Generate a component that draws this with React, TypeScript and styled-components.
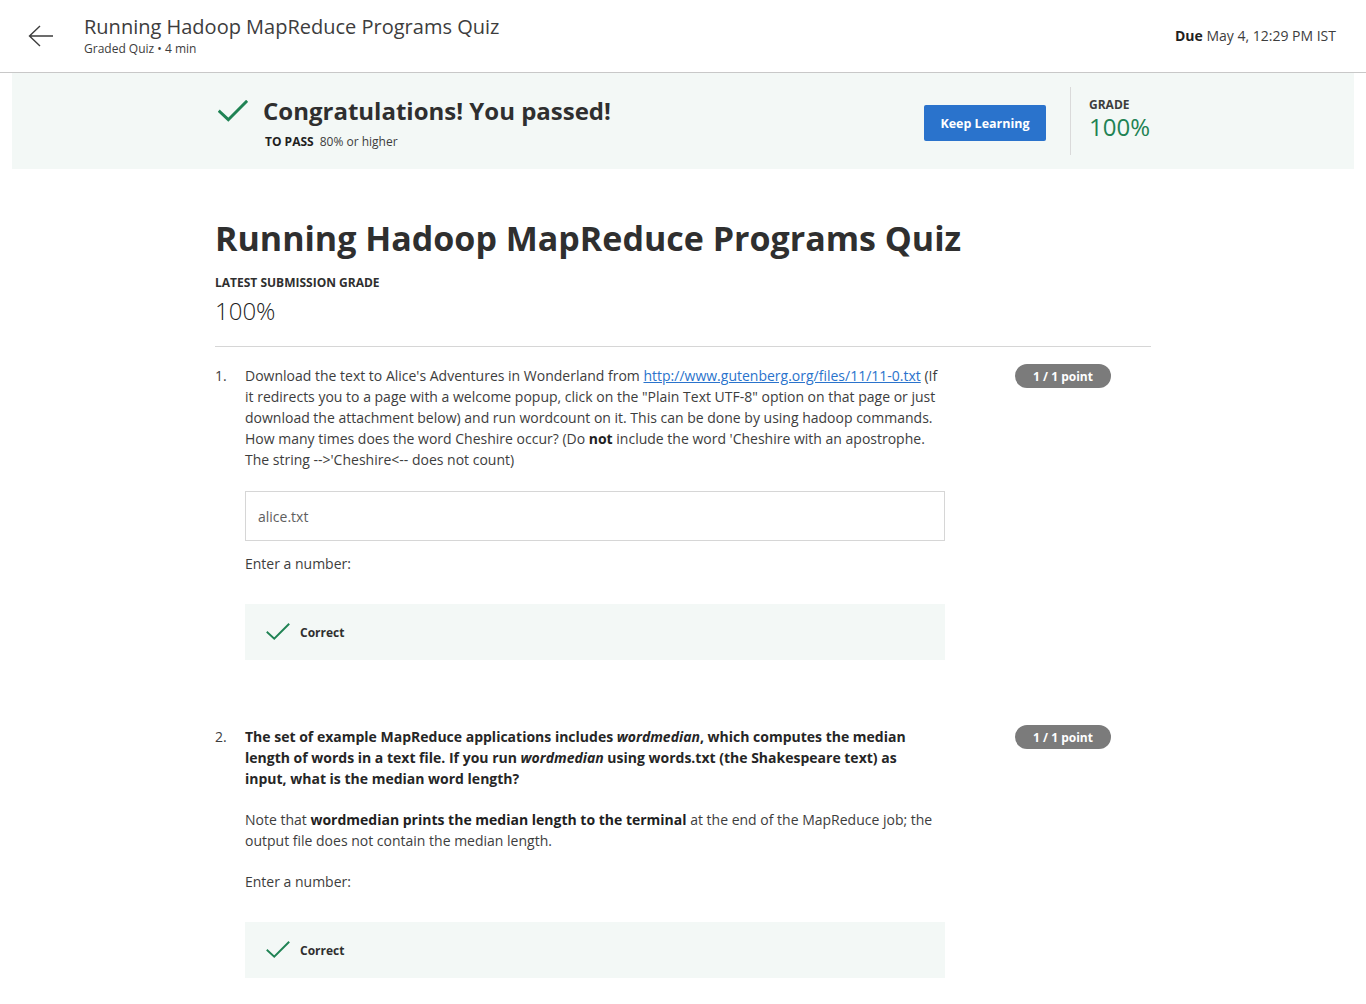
import React from 'react';
import styled, { createGlobalStyle } from 'styled-components';

const GlobalStyle = createGlobalStyle`
  body {
    margin: 0;
    font-family: "Open Sans", "Liberation Sans", sans-serif;
    color: #1f1f1f;
    background: #fff;
  }
`;

const Header = styled.header`
  height: 72px;
  border-bottom: 1px solid #c8c8c8;
  display: flex;
  align-items: center;
  padding: 0 30px 0 28px;
`;

const BackButton = styled.div`
  width: 28px;
  height: 28px;
  margin-right: 28px;
  display: flex;
  align-items: center;
  color: #3d3d3d;
`;

const HeaderTitles = styled.div`
  flex: 1;
  display: flex;
  flex-direction: column;
  margin-top: -1px;
`;

const HeaderTitle = styled.div`
  font-size: 20px;
  color: #3d3d3d;
  line-height: 26px;
`;

const HeaderSub = styled.div`
  font-size: 12px;
  color: #3d3d3d;
  line-height: 17px;
`;

const Due = styled.div`
  font-size: 14px;
  color: #3d3d3d;
  margin-top: -2px;
  b { font-weight: 700; color: #1f1f1f; }
`;

const Banner = styled.div`
  margin: 0 12px;
  height: 96px;
  background: #f3f8f6;
  display: flex;
  justify-content: center;
`;

const BannerInner = styled.div`
  width: 936px;
  display: flex;
  align-items: center;
`;

const PassBlock = styled.div`
  flex: 1;
  display: flex;
  align-items: flex-start;
  padding-top: 2px;
`;

const PassCheck = styled.div`
  width: 32px;
  margin-left: 3px;
  margin-right: 13px;
  margin-top: 5px;
`;

const PassTitle = styled.div`
  font-size: 24px;
  font-weight: 700;
  color: #2f2f2f;
  line-height: 32px;
`;

const PassSub = styled.div`
  font-size: 12px;
  color: #3d3d3d;
  margin-top: 6px;
  margin-left: 2px;
  b { font-weight: 700; color: #1f1f1f; margin-right: 6px; }
`;

const KeepButton = styled.button`
  background: #2a73cc;
  color: #fff;
  border: none;
  border-radius: 2px;
  width: 122px;
  height: 36px;
  font-family: inherit;
  font-size: 12.5px;
  font-weight: 700;
  cursor: pointer;
  margin-right: 24px;
  margin-top: 4px;
`;

const GradeBlock = styled.div`
  border-left: 1px solid #dadada;
  height: 68px;
  padding-left: 18px;
  width: 62px;
  display: flex;
  flex-direction: column;
  justify-content: center;
`;

const GradeLabel = styled.div`
  font-size: 12px;
  font-weight: 700;
  color: #3d3d3d;
  line-height: 16px;
  margin-top: -4px;
`;

const GradeValue = styled.div`
  font-size: 24px;
  color: #1f8354;
  line-height: 28px;
  font-weight: 400;
`;

const Main = styled.main`
  width: 936px;
  margin: 0 auto;
  padding-top: 47px;
`;

const QuizTitle = styled.h1`
  font-size: 34px;
  font-weight: 700;
  color: #2f2f2f;
  margin: 0;
  line-height: 44px;
`;

const SubLabel = styled.div`
  font-size: 12px;
  font-weight: 700;
  color: #2f2f2f;
  margin-top: 15px;
  line-height: 16px;
`;

const SubValue = styled.div`
  font-size: 24px;
  font-weight: 300;
  color: #1f1f1f;
  line-height: 32px;
  margin-top: 4px;
`;

const Divider = styled.hr`
  border: none;
  border-top: 1px solid #d6d6d6;
  margin: 19px 0 0;
`;

const Question = styled.section`
  display: flex;
  padding-top: 18px;
  padding-bottom: 48px;
`;

const QNum = styled.div`
  width: 30px;
  font-size: 14px;
  line-height: 21px;
  color: #3d3d3d;
`;

const QBody = styled.div`
  width: 700px;
  font-size: 14px;
  line-height: 21px;
  color: #3d3d3d;
  a { color: #2a73cc; }
  b { color: #1f1f1f; }
`;

const QPrompt = styled.div<{ $bold?: boolean }>`
  font-weight: ${p => (p.$bold ? 700 : 400)};
  color: ${p => (p.$bold ? '#262626' : '#3d3d3d')};
  margin-bottom: ${p => (p.$bold ? '20px' : '0')};
  max-width: ${p => (p.$bold ? '686px' : 'none')};
`;

const PointsCell = styled.div`
  flex: 1;
  display: flex;
  justify-content: flex-end;
  padding-right: 40px;
  align-items: flex-start;
`;

const Points = styled.span`
  background: #7b7b7b;
  color: #fff;
  font-size: 12px;
  font-weight: 700;
  border-radius: 12px;
  width: 96px;
  height: 24px;
  display: flex;
  align-items: center;
  justify-content: center;
  margin-top: -1px;
`;

const AnswerBox = styled.div`
  margin-top: 21px;
  height: 48px;
  border: 1px solid #d6d6d6;
  padding: 0 12px;
  display: flex;
  align-items: center;
  color: #5e5e5e;
  font-size: 14px;
`;

const EnterLabel = styled.div<{ $tight?: boolean }>`
  margin-top: ${p => (p.$tight ? '20px' : '12px')};
  color: #3d3d3d;
`;

const Feedback = styled.div`
  margin-top: 30px;
  height: 56px;
  background: #f3f8f6;
  display: flex;
  align-items: center;
  padding-left: 21px;
  font-size: 12px;
  font-weight: 700;
  color: #2f2f2f;
  gap: 10px;
`;

const Check = ({ size }: { size: number }) => (
  <svg width={size} height={size * 0.75} viewBox="0 0 32 24" fill="none">
    <path d="M2 12.5 L11 21 L30 2" stroke="#1f8354" strokeWidth={size > 24 ? 3.2 : 2.6} strokeLinecap="square" />
  </svg>
);

const App: React.FC = () => (
  <>
    <GlobalStyle />
    <Header>
      <BackButton>
        <svg width="26" height="22" viewBox="0 0 26 22" fill="none">
          <path d="M25 11 H2 M12 1 L1.5 11 L12 21" stroke="#3d3d3d" strokeWidth="1.4" />
        </svg>
      </BackButton>
      <HeaderTitles>
        <HeaderTitle>Running Hadoop MapReduce Programs Quiz</HeaderTitle>
        <HeaderSub>Graded Quiz • 4 min</HeaderSub>
      </HeaderTitles>
      <Due><b>Due</b> May 4, 12:29 PM IST</Due>
    </Header>

    <Banner>
      <BannerInner>
        <PassBlock>
          <PassCheck><Check size={30} /></PassCheck>
          <div>
            <PassTitle>Congratulations! You passed!</PassTitle>
            <PassSub><b>TO PASS</b>80% or higher</PassSub>
          </div>
        </PassBlock>
        <KeepButton>Keep Learning</KeepButton>
        <GradeBlock>
          <GradeLabel>GRADE</GradeLabel>
          <GradeValue>100%</GradeValue>
        </GradeBlock>
      </BannerInner>
    </Banner>

    <Main>
      <QuizTitle>Running Hadoop MapReduce Programs Quiz</QuizTitle>
      <SubLabel>LATEST SUBMISSION GRADE</SubLabel>
      <SubValue>100%</SubValue>
      <Divider />

      <Question>
        <QNum>1.</QNum>
        <QBody>
          <QPrompt>
            Download the text to Alice's Adventures in Wonderland from{' '}
            <a href="#">http://www.gutenberg.org/files/11/11-0.txt</a> (If it redirects you to a page with a
            welcome popup, click on the "Plain Text UTF-8" option on that page or just download the attachment
            below) and run wordcount on it. This can be done by using hadoop commands. How many times does the word
            Cheshire occur? (Do <b>not</b> include the word 'Cheshire with an apostrophe. The string
            --&gt;'Cheshire&lt;-- does not count)
          </QPrompt>
          <AnswerBox>alice.txt</AnswerBox>
          <EnterLabel>Enter a number:</EnterLabel>
          <Feedback>
            <Check size={24} />
            Correct
          </Feedback>
        </QBody>
        <PointsCell><Points>1 / 1 point</Points></PointsCell>
      </Question>

      <Question>
        <QNum>2.</QNum>
        <QBody>
          <QPrompt $bold>
            The set of example MapReduce applications includes <i>wordmedian</i>, which computes the median length
            of words in a text file. If you run <i>wordmedian</i> using words.txt (the Shakespeare text) as input,
            what is the median word length?
          </QPrompt>
          <QPrompt>
            Note that <b>wordmedian prints the median length to the terminal</b> at the end of the MapReduce job;
            the output file does not contain the median length.
          </QPrompt>
          <EnterLabel $tight>Enter a number:</EnterLabel>
          <Feedback>
            <Check size={24} />
            Correct
          </Feedback>
        </QBody>
        <PointsCell><Points>1 / 1 point</Points></PointsCell>
      </Question>
    </Main>
  </>
);

export default App;
